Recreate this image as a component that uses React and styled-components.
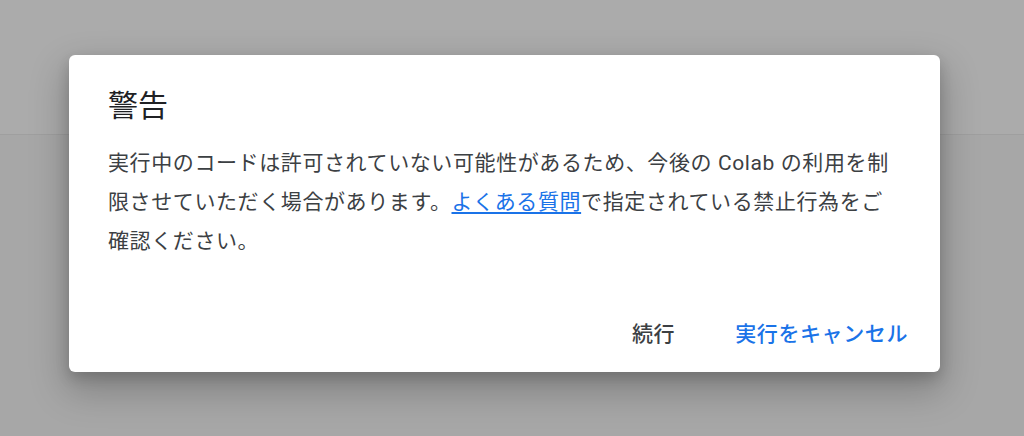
import styled, { createGlobalStyle } from 'styled-components';

const GlobalStyle = createGlobalStyle`
  html, body {
    margin: 0;
    padding: 0;
    height: 100%;
  }
  body {
    font-family: Roboto, "Noto Sans CJK JP", sans-serif;
    background: #a8a8a8;
    overflow: hidden;
  }
  #root {
    height: 100%;
  }
`;

export default function App() {
  return (
    <>
      <GlobalStyle />
      <Page>
        <Header />
        <Backdrop>
          <Dialog role='alertdialog' aria-labelledby='warn-title'>
            <Title id='warn-title'>警告</Title>
            <Body>
              実行中のコードは許可されていない可能性があるため、今後の Colab の利用を制限させていただく場合があります。
              <Link href='#'>よくある質問</Link>で指定されている禁止行為をご確認ください。
            </Body>
            <Actions>
              <ActionButton type='button'>続行</ActionButton>
              <ActionButton type='button' primary>
                実行をキャンセル
              </ActionButton>
            </Actions>
          </Dialog>
        </Backdrop>
      </Page>
    </>
  );
}

const Page = styled.div`
  position: relative;
  height: 100%;
  background: #a7a7a7;
`;

const Header = styled.header`
  height: 134px;
  background: #ababab;
  border-bottom: 1px solid #9f9f9f;
`;

// dialog sits over the page, so it is the one absolutely placed thing
const Backdrop = styled.div`
  position: absolute;
  inset: 0;
  padding: 55px 0 0 69px;
`;

const Dialog = styled.div`
  box-sizing: border-box;
  width: 871px;
  height: 317px;
  display: flex;
  flex-direction: column;
  padding: 31px 14px 13px 39px;
  background: #fff;
  border-radius: 6px;
  box-shadow: 0 16px 36px 4px rgba(0, 0, 0, 0.22), 0 6px 14px rgba(0, 0, 0, 0.16);
`;

const Title = styled.h2`
  margin: 0;
  font-size: 30px;
  line-height: 40px;
  font-weight: 400;
  color: #202124;
`;

const Body = styled.p`
  margin: 18px 26px 0 0;
  font-size: 21px;
  line-height: 39px;
  color: #3c4043;
  letter-spacing: 0.6px;
`;

const Link = styled.a`
  color: #1a73e8;
  text-decoration: underline;
  text-underline-offset: 3px;
`;

const Actions = styled.div`
  margin-top: auto;
  display: flex;
  justify-content: flex-end;
  gap: 24px;
`;

const ActionButton = styled.button`
  height: 54px;
  padding: 0 18px;
  border: none;
  background: transparent;
  font-family: inherit;
  font-size: 21px;
  font-weight: 500;
  letter-spacing: 0.6px;
  color: ${({ primary }) => (primary ? '#1a73e8' : '#3c4043')};
  cursor: pointer;
`;
